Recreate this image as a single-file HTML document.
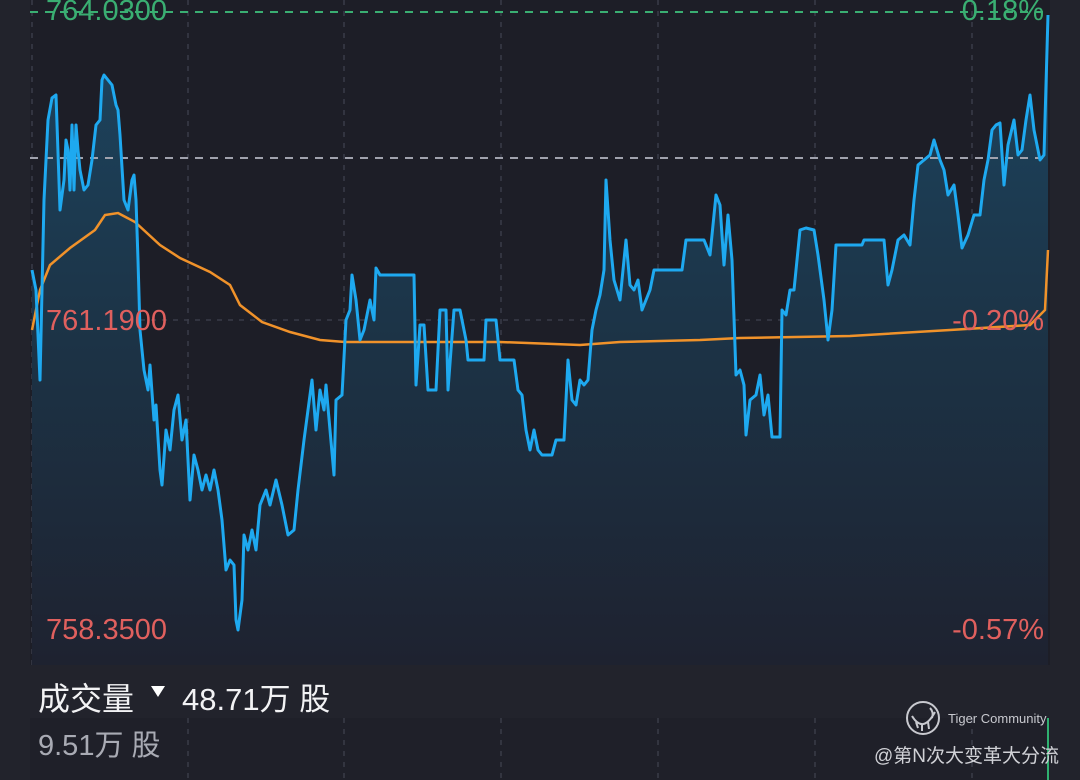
<!DOCTYPE html>
<html><head><meta charset="utf-8"><style>
html,body{margin:0;padding:0;background:#22232c;width:1080px;height:780px;overflow:hidden;font-family:"Liberation Sans","Noto Sans CJK SC",sans-serif}
.t{position:absolute;font-size:27px;white-space:nowrap}
</style></head><body>
<svg width="1080" height="780" style="position:absolute;left:0;top:0">
<defs><linearGradient id="g" x1="0" y1="0" x2="0" y2="1"><stop offset="0" stop-color="#1d4560"/><stop offset="0.5" stop-color="#1c3346"/><stop offset="1" stop-color="#1e2230"/></linearGradient></defs>
<rect x="0" y="0" width="1080" height="780" fill="#22232c"/>
<rect x="30" y="0" width="1020" height="665" fill="#1d1e27"/>
<rect x="30" y="718" width="1020" height="62" fill="#1f2029"/>
<g stroke="#3a3c48" stroke-width="1.5" stroke-dasharray="5 6">
<line x1="32" y1="0" x2="32" y2="665"/><line x1="188" y1="0" x2="188" y2="665"/><line x1="344" y1="0" x2="344" y2="665"/><line x1="501" y1="0" x2="501" y2="665"/><line x1="658" y1="0" x2="658" y2="665"/><line x1="815" y1="0" x2="815" y2="665"/><line x1="972" y1="0" x2="972" y2="665"/>
<line x1="188" y1="718" x2="188" y2="780"/><line x1="344" y1="718" x2="344" y2="780"/><line x1="501" y1="718" x2="501" y2="780"/><line x1="658" y1="718" x2="658" y2="780"/><line x1="815" y1="718" x2="815" y2="780"/><line x1="972" y1="718" x2="972" y2="780"/>
<line x1="30" y1="320" x2="1048" y2="320"/>
</g>
<polygon fill="url(#g)" points="32,665 32,270 36,290 40,380 44,200 48,120 52,98 56,95 60,210 64,180 66,140 68,150 70,190 72,125 74,190 76,125 78,150 80,170 84,190 88,185 92,160 96,125 100,120 102,80 104,75 108,80 112,85 116,105 118,110 120,135 124,200 128,210 132,180 134,175 136,200 138,260 140,330 144,370 148,390 150,365 154,420 156,405 160,470 162,485 166,430 170,450 174,410 178,395 182,440 186,420 190,500 194,455 198,470 202,490 206,475 210,490 214,470 218,490 222,520 226,570 230,560 234,565 236,620 238,630 242,600 244,535 248,550 252,530 256,550 260,505 266,490 270,505 276,480 282,505 288,535 294,530 298,490 304,440 308,410 312,380 316,430 320,390 324,410 326,385 330,430 334,475 336,400 342,395 346,320 350,310 352,275 356,300 360,340 364,330 370,300 374,320 376,268 380,275 414,275 416,385 420,325 424,325 428,390 436,390 440,310 446,310 448,390 454,310 460,310 466,340 468,360 484,360 486,320 496,320 500,360 514,360 518,390 522,395 526,430 530,450 534,430 538,450 542,455 552,455 556,440 564,440 568,360 572,400 576,405 580,380 584,385 588,380 592,330 596,310 600,295 604,270 606,180 610,240 614,280 620,300 626,240 630,285 634,290 638,280 642,310 646,300 650,290 654,270 682,270 686,240 704,240 710,255 716,195 720,205 724,265 728,215 732,260 736,375 740,370 744,385 746,435 750,400 756,395 760,375 764,415 768,395 772,437 780,437 782,310 786,315 790,290 794,290 800,230 806,228 814,230 818,255 824,300 828,340 832,310 836,245 840,245 862,245 864,240 884,240 888,285 892,270 898,240 904,235 910,245 914,200 918,165 924,160 930,155 934,140 940,160 944,170 948,195 954,185 958,215 962,248 968,235 974,215 980,215 984,180 988,160 992,130 996,125 1000,123 1004,185 1008,145 1014,120 1018,155 1022,150 1026,120 1030,95 1034,130 1040,160 1044,155 1048,15 1048,665"/>
<line x1="30" y1="158" x2="1048" y2="158" stroke="#a0a2ad" stroke-width="2" stroke-dasharray="8 7"/>
<line x1="30" y1="12" x2="1048" y2="12" stroke="#3aae72" stroke-width="2" stroke-dasharray="8 7"/>
<polyline fill="none" stroke="#f0922a" stroke-width="2.5" points="32,330 40,290 50,265 70,248 95,230 105,215 118,213 135,222 160,245 180,258 210,272 230,285 240,305 262,322 290,332 320,340 345,342 500,342 580,345 620,342 700,340 740,338 850,336 950,330 1030,325 1045,310 1048,250"/>
<polyline fill="none" stroke="#1ea9f0" stroke-width="3" stroke-linejoin="round" points="32,270 36,290 40,380 44,200 48,120 52,98 56,95 60,210 64,180 66,140 68,150 70,190 72,125 74,190 76,125 78,150 80,170 84,190 88,185 92,160 96,125 100,120 102,80 104,75 108,80 112,85 116,105 118,110 120,135 124,200 128,210 132,180 134,175 136,200 138,260 140,330 144,370 148,390 150,365 154,420 156,405 160,470 162,485 166,430 170,450 174,410 178,395 182,440 186,420 190,500 194,455 198,470 202,490 206,475 210,490 214,470 218,490 222,520 226,570 230,560 234,565 236,620 238,630 242,600 244,535 248,550 252,530 256,550 260,505 266,490 270,505 276,480 282,505 288,535 294,530 298,490 304,440 308,410 312,380 316,430 320,390 324,410 326,385 330,430 334,475 336,400 342,395 346,320 350,310 352,275 356,300 360,340 364,330 370,300 374,320 376,268 380,275 414,275 416,385 420,325 424,325 428,390 436,390 440,310 446,310 448,390 454,310 460,310 466,340 468,360 484,360 486,320 496,320 500,360 514,360 518,390 522,395 526,430 530,450 534,430 538,450 542,455 552,455 556,440 564,440 568,360 572,400 576,405 580,380 584,385 588,380 592,330 596,310 600,295 604,270 606,180 610,240 614,280 620,300 626,240 630,285 634,290 638,280 642,310 646,300 650,290 654,270 682,270 686,240 704,240 710,255 716,195 720,205 724,265 728,215 732,260 736,375 740,370 744,385 746,435 750,400 756,395 760,375 764,415 768,395 772,437 780,437 782,310 786,315 790,290 794,290 800,230 806,228 814,230 818,255 824,300 828,340 832,310 836,245 840,245 862,245 864,240 884,240 888,285 892,270 898,240 904,235 910,245 914,200 918,165 924,160 930,155 934,140 940,160 944,170 948,195 954,185 958,215 962,248 968,235 974,215 980,215 984,180 988,160 992,130 996,125 1000,123 1004,185 1008,145 1014,120 1018,155 1022,150 1026,120 1030,95 1034,130 1040,160 1044,155 1048,15"/>
<line x1="1048" y1="718" x2="1048" y2="780" stroke="#2fb070" stroke-width="2"/>
<circle cx="923" cy="718" r="16" fill="none" stroke="#c8c9cf" stroke-width="2"/>
<path d="M912,716 Q923,734 935,712 M916,722 L918,728 M922,724 L922,731 M928,722 L929,729 M930,708 Q934,712 932,718" fill="none" stroke="#c8c9cf" stroke-width="2"/>
<polygon points="151,686 165,686 158,697" fill="#ffffff"/>
</svg>
<div class="t" style="left:46px;top:-5px;color:#3aae72;font-size:29px">764.0300</div>
<div class="t" style="right:36px;top:-5px;color:#3aae72;font-size:29px">0.18%</div>
<div class="t" style="left:46px;top:305px;color:#e0605e;font-size:29px">761.1900</div>
<div class="t" style="right:36px;top:305px;color:#e0605e;font-size:29px">-0.20%</div>
<div class="t" style="left:46px;top:614px;color:#e0605e;font-size:29px">758.3500</div>
<div class="t" style="right:36px;top:614px;color:#e0605e;font-size:29px">-0.57%</div>
<div class="t" style="left:38px;top:674px;color:#f2f2f4;font-size:32px">成交量</div>
<div class="t" style="left:182px;top:674px;color:#f2f2f4;font-size:31px">48.71万 股</div>
<div class="t" style="left:38px;top:722px;color:#a9abb4;font-size:29px">9.51万 股</div>
<div class="t" style="left:948px;top:711px;color:#c8c9cf;font-size:13px">Tiger Community</div>
<div class="t" style="left:874px;top:741px;color:#d0d1d6;font-size:19px">@第N次大变革大分流</div>
</body></html>
